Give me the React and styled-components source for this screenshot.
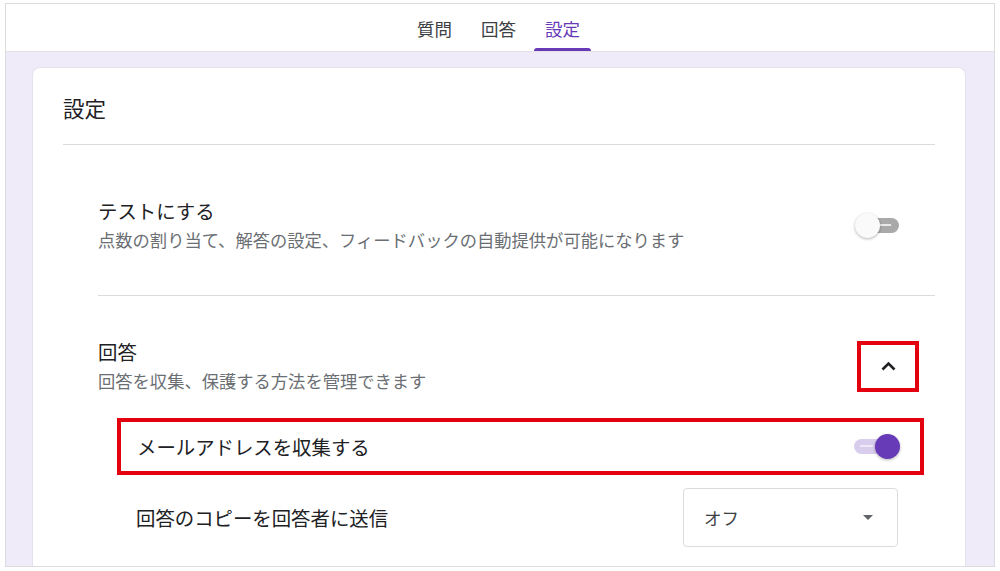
import styled, { createGlobalStyle } from "styled-components";

const GlobalStyle = createGlobalStyle`
  html, body {
    margin: 0;
    padding: 0;
    background: #ffffff;
  }
  body {
    font-family: "Noto Sans CJK JP", "Noto Sans", sans-serif;
    color: #202124;
  }
`;

const Frame = styled.div`
  margin: 3px 5px 0 5px;
  height: 564px;
  border: 1px solid #dadce0;
  box-sizing: border-box;
  display: flex;
  flex-direction: column;
  overflow: hidden;
`;

const Header = styled.header`
  height: 48px;
  flex-shrink: 0;
  background: #ffffff;
  border-bottom: 1px solid #e3e0e8;
  box-sizing: border-box;
  display: flex;
  justify-content: center;
  gap: 7px;
  padding-right: 3px;
`;

const Tab = styled.div`
  position: relative;
  height: 47px;
  box-sizing: border-box;
  padding: 2px 11px 0 11px;
  display: flex;
  align-items: center;
  font-size: 17.5px;
  color: ${(p) => (p.$active ? "#673ab7" : "#3c4043")};

  &::after {
    content: "";
    display: ${(p) => (p.$active ? "block" : "none")};
    position: absolute;
    left: 0;
    right: 0;
    bottom: 0;
    height: 3px;
    border-radius: 3px 3px 0 0;
    background: #673ab7;
  }
`;

const Body = styled.main`
  flex: 1;
  background: #f0ebf8;
  padding: 15px 28px 0 26px;
  overflow: hidden;
`;

const Card = styled.section`
  background: #ffffff;
  border: 1px solid #e6e1ee;
  border-bottom: none;
  border-radius: 8px 8px 0 0;
  padding: 0 30px 40px 30px;
  min-height: 520px;
`;

const CardHeading = styled.h1`
  margin: 0;
  padding: 26px 0 22px 0;
  font-size: 21.5px;
  line-height: 28px;
  font-weight: 400;
  border-bottom: 1px solid #dadce0;
`;

const Section = styled.div`
  margin-left: 35px;
  padding: ${(p) => p.$pad};
  border-bottom: ${(p) => (p.$divider ? "1px solid #dadce0" : "none")};
`;

const SettingRow = styled.div`
  display: flex;
  align-items: center;
  justify-content: space-between;
`;

const TextBlock = styled.div`
  display: flex;
  flex-direction: column;
  gap: 4px;
`;

const Title = styled.div`
  font-size: 19.4px;
  line-height: 26px;
  color: #202124;
`;

const Subtitle = styled.div`
  font-size: 17.3px;
  line-height: 24px;
  color: #6b6f74;
`;

const Track = styled.div`
  position: relative;
  width: 42px;
  height: 15px;
  border-radius: 8px;
  background: ${(p) => (p.$on ? "#d8cdec" : "#a9a9a9")};
  margin-right: ${(p) => (p.$on ? "3px" : "0")};
`;

const TrackLine = styled.span`
  position: absolute;
  top: 6px;
  ${(p) => (p.$on ? "left: 6px;" : "right: 8px;")}
  width: 13px;
  height: 2px;
  background: ${(p) => (p.$on ? "#eee8f7" : "#e8e8e8")};
`;

const Thumb = styled.span`
  position: absolute;
  top: -5px;
  ${(p) => (p.$on ? "right: -4px;" : "left: -2px;")}
  width: 25px;
  height: 25px;
  border-radius: 50%;
  background: ${(p) => (p.$on ? "#673ab7" : "#fafafa")};
  box-shadow: 0 1px 3px rgba(0, 0, 0, 0.3);
`;

const Toggle = ({ on }) => (
  <Track $on={on}>
    <TrackLine $on={on} />
    <Thumb $on={on} />
  </Track>
);

const HighlightButton = styled.div`
  width: 62px;
  height: 51px;
  box-sizing: border-box;
  border: 4px solid #e3000f;
  margin-right: 16px;
  display: flex;
  align-items: center;
  justify-content: center;
`;

const HighlightRow = styled.div`
  margin: 25px 11px 0 19px;
  height: 57px;
  box-sizing: border-box;
  border: 4px solid #e3000f;
  padding: 0 21px 0 16px;
  display: flex;
  align-items: center;
  justify-content: space-between;
`;

const SubRow = styled.div`
  margin-top: 13px;
  padding: 0 37px 0 38px;
  display: flex;
  align-items: center;
  justify-content: space-between;
`;

const Select = styled.div`
  width: 215px;
  height: 59px;
  box-sizing: border-box;
  border: 1px solid #dadce0;
  border-radius: 4px;
  padding: 0 24px 0 20px;
  display: flex;
  align-items: center;
  justify-content: space-between;
  font-size: 17.5px;
  color: #3c4043;
`;

const Caret = styled.span`
  width: 0;
  height: 0;
  border-left: 5.5px solid transparent;
  border-right: 5.5px solid transparent;
  border-top: 5.5px solid #5f6368;
`;

export default function App() {
  return (
    <>
      <GlobalStyle />
      <Frame>
        <Header>
          <Tab>質問</Tab>
          <Tab>回答</Tab>
          <Tab $active>設定</Tab>
        </Header>
        <Body>
          <Card>
            <CardHeading>設定</CardHeading>
            <Section $divider $pad="53px 36px 43px 0">
              <SettingRow>
                <TextBlock>
                  <Title>テストにする</Title>
                  <Subtitle>
                    点数の割り当て、解答の設定、フィードバックの自動提供が可能になります
                  </Subtitle>
                </TextBlock>
                <Toggle on={false} />
              </SettingRow>
            </Section>
            <Section $pad="43px 0 0 0">
              <SettingRow>
                <TextBlock>
                  <Title>回答</Title>
                  <Subtitle>回答を収集、保護する方法を管理できます</Subtitle>
                </TextBlock>
                <HighlightButton>
                  <svg width="15" height="10" viewBox="0 0 15 10">
                    <polyline
                      points="1.5,8.5 7.5,2.5 13.5,8.5"
                      fill="none"
                      stroke="#202124"
                      strokeWidth="2.6"
                    />
                  </svg>
                </HighlightButton>
              </SettingRow>
              <HighlightRow>
                <Title>メールアドレスを収集する</Title>
                <Toggle on />
              </HighlightRow>
              <SubRow>
                <Title>回答のコピーを回答者に送信</Title>
                <Select>
                  <span>オフ</span>
                  <Caret />
                </Select>
              </SubRow>
            </Section>
          </Card>
        </Body>
      </Frame>
    </>
  );
}
